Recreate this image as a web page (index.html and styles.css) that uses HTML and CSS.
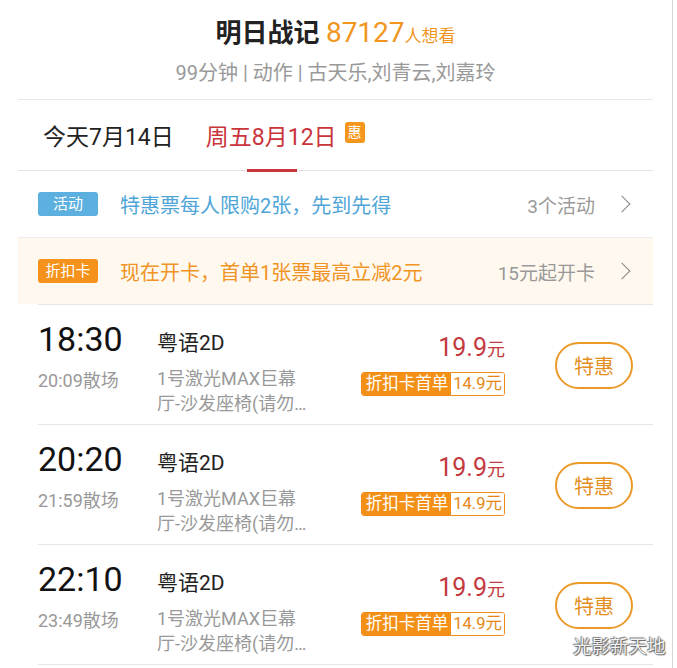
FILE: index.html
```html
<!DOCTYPE html>
<html lang="zh-CN">
<head>
    <meta charset="UTF-8">
    <meta name="viewport" content="width=device-width, initial-scale=1.0">
    <title>明日战记 - 选座购票</title>
    <link rel="stylesheet" href="styles.css">
</head>
<body>
<div class="page">
    <div class="panel">
        <div class="movie-head">
            <h1 class="movie-title">明日战记 <span class="want-num">87127</span><span class="want-label">人想看</span></h1>
            <p class="movie-meta">99分钟 | 动作 | 古天乐,刘青云,刘嘉玲</p>
        </div>

        <div class="date-tabs">
            <div class="date-tab">今天7月14日</div>
            <div class="date-tab active">周五8月12日<span class="hui">惠</span></div>
        </div>

        <div class="promo-row">
            <span class="promo-tag blue">活动</span>
            <span class="promo-text blue-text">特惠票每人限购2张，先到先得</span>
            <span class="promo-more">3个活动</span>
            <span class="chev"></span>
        </div>

        <div class="promo-row card">
            <span class="promo-tag orange">折扣卡</span>
            <span class="promo-text orange-text">现在开卡，首单1张票最高立减2元</span>
            <span class="promo-more">15元起开卡</span>
            <span class="chev"></span>
        </div>

        <div class="show-list">
            <div class="show">
                <div class="show-time">
                    <div class="start">18:30</div>
                    <div class="end">20:09散场</div>
                </div>
                <div class="show-info">
                    <div class="lang">粤语2D</div>
                    <div class="hall">1号激光MAX巨幕<br>厅-沙发座椅(请勿…</div>
                </div>
                <div class="show-price">
                    <div class="price">19.9<span class="yuan">元</span></div>
                    <div class="card-price"><span class="cp-label">折扣卡首单</span><span class="cp-val">14.9元</span></div>
                </div>
                <button class="buy-btn">特惠</button>
            </div>
            <div class="show">
                <div class="show-time">
                    <div class="start">20:20</div>
                    <div class="end">21:59散场</div>
                </div>
                <div class="show-info">
                    <div class="lang">粤语2D</div>
                    <div class="hall">1号激光MAX巨幕<br>厅-沙发座椅(请勿…</div>
                </div>
                <div class="show-price">
                    <div class="price">19.9<span class="yuan">元</span></div>
                    <div class="card-price"><span class="cp-label">折扣卡首单</span><span class="cp-val">14.9元</span></div>
                </div>
                <button class="buy-btn">特惠</button>
            </div>
            <div class="show">
                <div class="show-time">
                    <div class="start">22:10</div>
                    <div class="end">23:49散场</div>
                </div>
                <div class="show-info">
                    <div class="lang">粤语2D</div>
                    <div class="hall">1号激光MAX巨幕<br>厅-沙发座椅(请勿…</div>
                </div>
                <div class="show-price">
                    <div class="price">19.9<span class="yuan">元</span></div>
                    <div class="card-price"><span class="cp-label">折扣卡首单</span><span class="cp-val">14.9元</span></div>
                </div>
                <button class="buy-btn">特惠</button>
            </div>
        </div>
    </div>
    <div class="watermark">光影新天地</div>
</div>
</body>
</html>
```

FILE: styles.css
```css
body {
    margin: 0;
    background: #fff;
    font-family: Roboto, "Noto Sans CJK SC", sans-serif;
    color: #222;
}
.page {
    position: relative;
    width: 672px;
    height: 668px;
    border-right: 1px solid #d6d6d6;
    overflow: hidden;
}
.panel {
    margin-left: 18px;
    width: 635px;
}
.movie-head {
    height: 100px;
    border-bottom: 1px solid #e8e8e8;
    text-align: center;
    box-sizing: border-box;
    padding-top: 14px;
}
.movie-title {
    margin: 0;
    font-size: 26px;
    font-weight: bold;
    line-height: 38px;
    color: #222;
}
.want-num {
    font-weight: normal;
    font-size: 28px;
    color: #f0961e;
}
.want-label {
    font-weight: normal;
    font-size: 17px;
    color: #f0961e;
}
.movie-meta {
    margin: 3px 0 0;
    font-size: 20px;
    line-height: 30px;
    color: #999;
}
.date-tabs {
    display: flex;
    height: 71px;
    padding-left: 25px;
    gap: 32px;
    border-bottom: 1px solid #e4e4e4;
    box-sizing: border-box;
}
.date-tab {
    position: relative;
    display: flex;
    align-items: center;
    height: 72px;
    font-size: 23px;
    color: #222;
    padding-bottom: 2px;
    box-sizing: border-box;
}
.date-tab.active {
    color: #c9353b;
}
.date-tab.active::after {
    content: "";
    position: absolute;
    left: 41px;
    bottom: 0;
    width: 50px;
    height: 3px;
    background: #c9353b;
}
.hui {
    margin-left: 8px;
    margin-top: -6px;
    width: 20px;
    height: 21px;
    border-radius: 3px;
    background: #f4951c;
    color: #fff;
    font-size: 14px;
    line-height: 21px;
    text-align: center;
}
.promo-row {
    display: flex;
    align-items: center;
    height: 66px;
    padding: 0 24px 0 20px;
    border-bottom: 1px solid #ececec;
}
.promo-row.card {
    background: #fff8ee;
    border-bottom: none;
}
.promo-tag {
    width: 60px;
    height: 24px;
    border-radius: 3px;
    color: #fff;
    font-size: 15px;
    line-height: 24px;
    text-align: center;
}
.promo-tag.blue {
    background: #5bb0e0;
}
.promo-tag.orange {
    background: #f5921c;
}
.promo-text {
    margin-left: 22px;
    font-size: 20px;
    flex: 1;
}
.blue-text {
    color: #4ea5d7;
}
.orange-text {
    color: #ef9424;
}
.promo-more {
    font-size: 19px;
    color: #999;
}
.chev {
    width: 11px;
    height: 11px;
    margin-left: 21px;
    margin-right: 1px;
    border-top: 1.5px solid #888;
    border-right: 1.5px solid #888;
    transform: rotate(45deg);
}
.show-list {
    margin-left: 20px;
}
.show {
    display: flex;
    height: 119px;
    border-top: 1px solid #e6e6e6;
    padding-right: 20px;
}
.show:last-child {
    border-bottom: 1px solid #e6e6e6;
}
.show-time {
    width: 119px;
    padding-top: 14px;
}
.start {
    font-size: 34px;
    line-height: 40px;
    color: #111;
}
.end {
    margin-top: 10px;
    font-size: 18px;
    line-height: 24px;
    color: #999;
}
.show-info {
    width: 190px;
    padding-top: 23px;
}
.lang {
    font-size: 21px;
    line-height: 30px;
    color: #222;
}
.hall {
    margin-top: 8px;
    font-size: 18px;
    line-height: 25px;
    color: #999;
}
.show-price {
    flex: 1;
    display: flex;
    flex-direction: column;
    align-items: flex-end;
    padding-top: 26px;
}
.price {
    font-size: 25px;
    line-height: 34px;
    color: #c23a3e;
}
.yuan {
    font-size: 18px;
}
.card-price {
    display: flex;
    margin-top: 5px;
    height: 22px;
    border: 1px solid #f08c1a;
    border-radius: 3px;
    overflow: hidden;
    font-size: 16.5px;
    line-height: 22px;
}
.cp-label {
    background: #f39015;
    color: #fff;
    padding: 0 3px 0 4px;
}
.cp-val {
    background: #fff;
    color: #e58716;
    padding: 0 2px 0 2px;
}
.buy-btn {
    align-self: flex-start;
    margin-top: 37px;
    margin-left: 50px;
    width: 78px;
    height: 47px;
    border: 2px solid #eb9a2a;
    border-radius: 24px;
    background: #fff;
    color: #e4901e;
    font-family: "Noto Sans CJK SC", sans-serif;
    font-size: 20px;
    padding: 0;
}
.watermark {
    position: absolute;
    left: 573px;
    top: 632px;
    font-family: "Noto Sans CJK SC", sans-serif;
    font-size: 18.5px;
    color: #f4f4f4;
    text-shadow: 0 0 1px #444, 1px 1px 1px #666, -1px -1px 1px #888;
}
```
